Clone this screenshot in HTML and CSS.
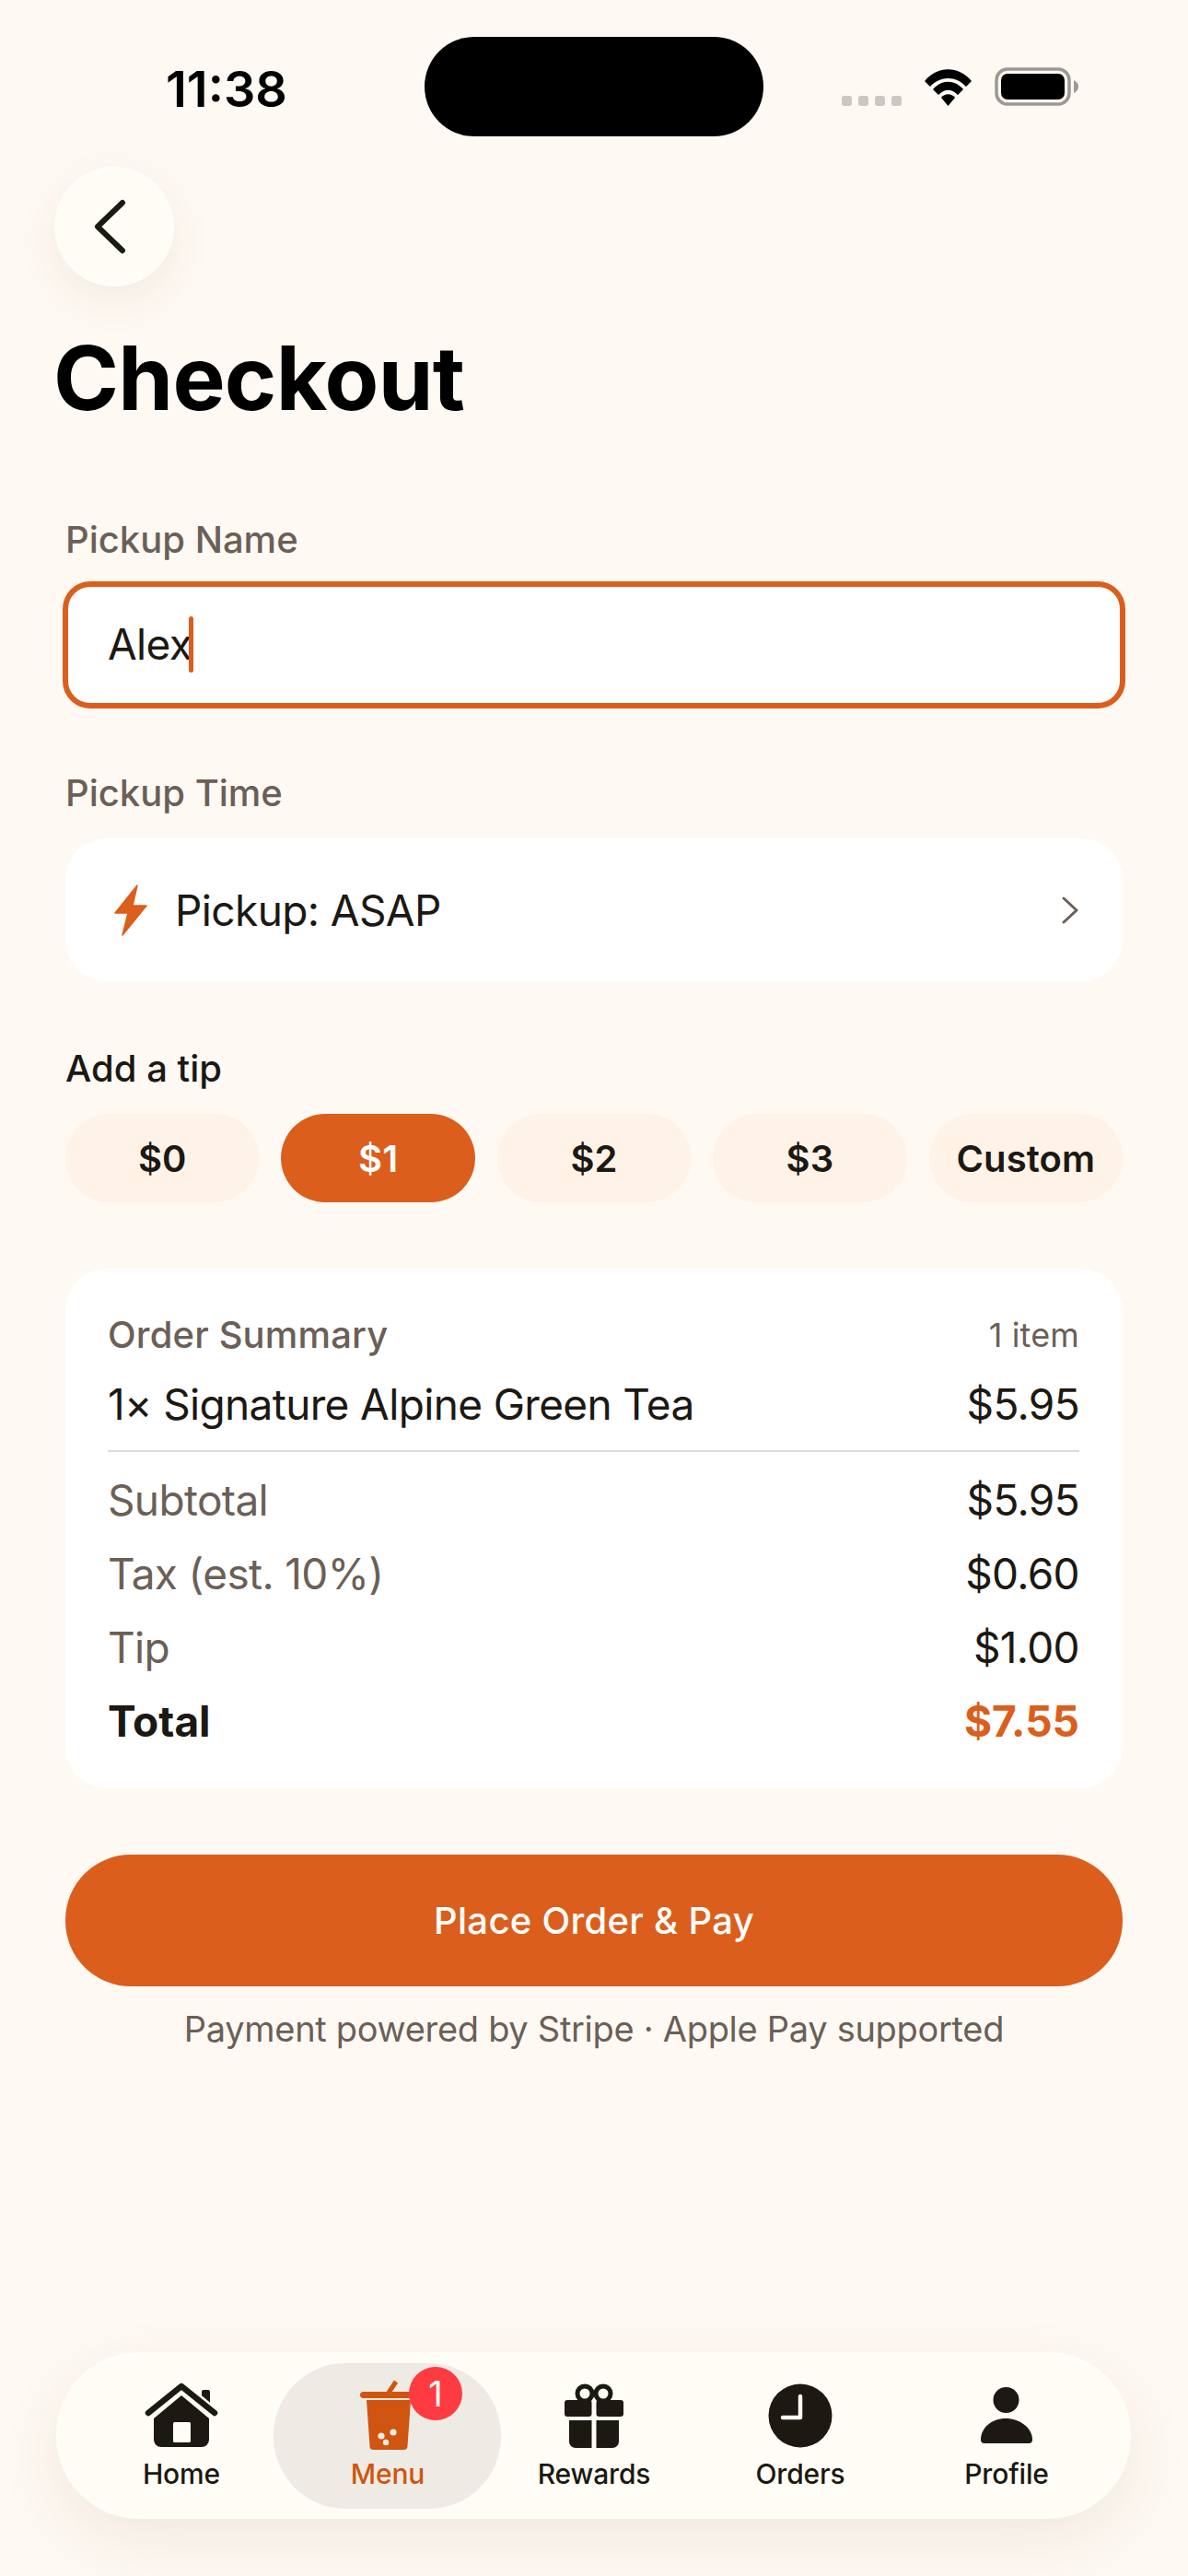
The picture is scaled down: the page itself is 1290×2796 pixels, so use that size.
FILE: index.html
```html
<!DOCTYPE html>
<html lang="en">
<head>
  <meta charset="UTF-8" />
  <meta name="viewport" content="width=device-width, initial-scale=1.0"/>
  <title>Checkout</title>
  <link rel="stylesheet" href="styles.css">
</head>
<body>

  <div class="status">
    <span class="time">11:38</span>
    <div class="island"></div>
    <div class="status-icons">
      <div class="dots"><i></i><i></i><i></i><i></i></div>
      <svg width="55" height="41" viewBox="0 0 55 41">
        <path d="M2 14 C16 -3 39 -3 53 14 L47 20 C36 8 19 8 8 20 Z" fill="#000"/>
        <path d="M11 23 C20 12 35 12 44 23 L38 29 C31 22 24 22 17 29 Z" fill="#000"/>
        <path d="M20 32 C24 27 31 27 35 32 L27.5 41 Z" fill="#000"/>
      </svg>
      <svg width="91" height="42" viewBox="0 0 91 42">
        <rect x="2" y="2" width="79" height="38" rx="12" fill="none" stroke="#9c9892" stroke-width="3.5"/>
        <rect x="7" y="7" width="69" height="28" rx="7" fill="#000"/>
        <path d="M86 14 C90 16 91 19 91 21 C91 23 90 26 86 28 Z" fill="#9c9892"/>
      </svg>
    </div>
  </div>

  <button class="back">
    <svg width="36" height="60" viewBox="0 0 36 60">
      <path d="M32 4 L5 30 L32 56" fill="none" stroke="#1c1812" stroke-width="6" stroke-linecap="round" stroke-linejoin="round"/>
    </svg>
  </button>

  <h1 class="title">Checkout</h1>

  <div class="form">
    <div class="label">Pickup Name</div>
    <div class="input">Alex<span class="caret"></span></div>

    <div class="label label-time">Pickup Time</div>
    <div class="picker">
      <svg width="36" height="56" viewBox="0 0 36 56">
        <path d="M25 1 L1 31 H15 L9 55 L35 23 H20 Z" fill="#db5e1c" stroke="#db5e1c" stroke-width="1.5" stroke-linejoin="round"/>
      </svg>
      <span class="picker-text">Pickup: ASAP</span>
      <svg class="picker-arrow" width="20" height="30" viewBox="0 0 20 30">
        <path d="M3 2 L17 15 L3 28" fill="none" stroke="#6b5f57" stroke-width="3" stroke-linecap="round" stroke-linejoin="round"/>
      </svg>
    </div>

    <div class="label label-tip">Add a tip</div>
    <div class="tips">
      <button class="tip">$0</button>
      <button class="tip selected">$1</button>
      <button class="tip">$2</button>
      <button class="tip">$3</button>
      <button class="tip">Custom</button>
    </div>

    <div class="summary">
      <div class="row head">
        <span>Order Summary</span>
        <span class="count">1 item</span>
      </div>
      <div class="row item">
        <span>1× Signature Alpine Green Tea</span>
        <span>$5.95</span>
      </div>
      <div class="divider"></div>
      <div class="row"><span class="muted">Subtotal</span><span>$5.95</span></div>
      <div class="row"><span class="muted">Tax (est. 10%)</span><span>$0.60</span></div>
      <div class="row"><span class="muted">Tip</span><span>$1.00</span></div>
      <div class="row total"><span>Total</span><span class="amount">$7.55</span></div>
    </div>

    <button class="pay">Place Order &amp; Pay</button>
    <p class="note">Payment powered by Stripe · Apple Pay supported</p>
  </div>

  <nav class="tabbar">
    <a class="tab">
      <span class="tab-icon">
        <svg width="80" height="72" viewBox="0 0 80 72" fill="#1c1812">
          <rect x="62" y="8" width="9" height="18" rx="2"/>
          <path d="M40 14 L70 39 V62 a8 8 0 0 1 -8 8 H18 a8 8 0 0 1 -8 -8 V39 Z"/>
          <rect x="31" y="43" width="19" height="22" rx="1.5" fill="#fffdf6"/>
          <path d="M4 33 L40 3 L76 33" fill="none" stroke="#fffdf6" stroke-width="11" stroke-linejoin="round"/>
          <path d="M4 33 L40 4 L76 33" fill="none" stroke="#1c1812" stroke-width="6.5" stroke-linecap="round" stroke-linejoin="round"/>
        </svg>
      </span>
      <span>Home</span>
    </a>
    <a class="tab active">
      <span class="tab-icon">
        <svg width="60" height="80" viewBox="0 0 60 80" fill="#cf5510">
          <path d="M31 15 L39 3" fill="none" stroke="#cf5510" stroke-width="5"/>
          <rect x="0" y="14" width="60" height="7" rx="3.5"/>
          <path d="M7 23 H55 L51.5 73 a4 4 0 0 1 -4 4 H14.5 a4 4 0 0 1 -4 -4 Z"/>
          <circle cx="23" cy="62" r="3.6" fill="#edebe4"/>
          <circle cx="36" cy="58" r="3.6" fill="#edebe4"/>
          <circle cx="28" cy="69" r="3.2" fill="#edebe4"/>
        </svg>
        <span class="badge">1</span>
      </span>
      <span>Menu</span>
    </a>
    <a class="tab">
      <span class="tab-icon">
        <svg width="64" height="70" viewBox="0 0 64 70" fill="#1c1812">
          <circle cx="22" cy="11" r="8" fill="none" stroke="#1c1812" stroke-width="5"/>
          <circle cx="42" cy="11" r="8" fill="none" stroke="#1c1812" stroke-width="5"/>
          <rect x="0" y="18" width="29.5" height="18" rx="3"/>
          <rect x="34.5" y="18" width="29.5" height="18" rx="3"/>
          <path d="M5 40 H29.5 V70 H12 a7 7 0 0 1 -7 -7 Z"/>
          <path d="M34.5 40 H59 V63 a7 7 0 0 1 -7 7 H34.5 Z"/>
        </svg>
      </span>
      <span>Rewards</span>
    </a>
    <a class="tab">
      <span class="tab-icon">
        <svg width="70" height="70" viewBox="0 0 70 70">
          <circle cx="35" cy="35" r="34.5" fill="#1c1812"/>
          <path d="M35 14 V37 H16" fill="none" stroke="#fffdf6" stroke-width="4.5" stroke-linecap="round" stroke-linejoin="round"/>
        </svg>
      </span>
      <span>Orders</span>
    </a>
    <a class="tab">
      <span class="tab-icon">
        <svg width="58" height="62" viewBox="0 0 58 62" fill="#1c1812">
          <circle cx="28.5" cy="14" r="14"/>
          <path d="M1 57 C1 44 13 34 28 34 C43 34 57 44 57 57 a4 4 0 0 1 -4 4 H5 a4 4 0 0 1 -4 -4 Z"/>
        </svg>
      </span>
      <span>Profile</span>
    </a>
  </nav>

</body>
</html>
```

FILE: styles.css
```css
* {
  box-sizing: border-box;
}

body {
  margin: 0;
  min-height: 100vh;
  display: flex;
  flex-direction: column;
  font-family: Inter, "Liberation Sans", sans-serif;
  background-color: #fff9f3;
  color: #1c1814;
}

button {
  font-family: inherit;
  border: none;
  padding: 0;
}

/* status bar */
.status {
  display: grid;
  grid-template-columns: 281px 368px 1fr;
  align-items: center;
  height: 108px;
  margin-top: 40px;
  padding: 0 119px 0 180px;
}

.time {
  font-size: 54px;
  font-weight: 600;
  color: #000;
  padding-top: 4px;
}

.island {
  height: 108px;
  border-radius: 54px;
  background-color: #000;
}

.status-icons {
  display: flex;
  align-items: flex-end;
  justify-content: flex-end;
  gap: 23px;
}

.dots {
  display: flex;
  gap: 7px;
}

.dots i {
  width: 11px;
  height: 11px;
  border-radius: 3px;
  background-color: #cbc7c3;
}

/* header */
.back {
  display: flex;
  align-items: center;
  justify-content: center;
  width: 130px;
  height: 130px;
  margin: 33px 0 0 59px;
  padding-right: 10px;
  border-radius: 50%;
  background-color: #fffdf6;
  box-shadow: 0 16px 48px rgba(70, 50, 30, 0.07);
}

.title {
  margin: 44px 0 0 58px;
  font-size: 96px;
  line-height: 110px;
  font-weight: 700;
  color: #000;
  letter-spacing: -0.7px;
}

/* form */
.form {
  margin-top: 96px;
  padding: 0 71px;
}

.label {
  font-size: 40px;
  line-height: 50px;
  font-weight: 500;
  color: #6b5f57;
}

.label-time {
  margin-top: 67px;
}

.label-tip {
  margin-top: 70px;
  color: #1c1814;
}

.input {
  display: flex;
  align-items: center;
  height: 138px;
  margin: 20px -3px 0;
  padding-left: 43px;
  padding-bottom: 2px;
  border: 6px solid #db5e1c;
  border-radius: 30px;
  background-color: #fff;
  font-size: 46px;
  letter-spacing: -0.65px;
}

.caret {
  width: 5px;
  height: 61px;
  margin-left: -3px;
  border-radius: 3px;
  background-color: #db5e1c;
}

.picker {
  display: flex;
  align-items: center;
  height: 155px;
  margin-top: 24px;
  padding: 0 47px 0 53px;
  border-radius: 45px;
  background-color: #fff;
}

.picker-text {
  margin-left: 30px;
  font-size: 46px;
  letter-spacing: -0.6px;
}

.picker-arrow {
  margin-left: auto;
}

.tips {
  display: grid;
  grid-template-columns: repeat(5, 1fr);
  gap: 24px;
  margin-top: 24px;
}

.tip {
  height: 96px;
  border-radius: 48px;
  background-color: #fff2e6;
  color: #1c1814;
  font-size: 40px;
  font-weight: 600;
  letter-spacing: 0.1px;
}

.tip.selected {
  background-color: #db5e1c;
  color: #fff;
}

/* order summary */
.summary {
  display: flex;
  flex-direction: column;
  gap: 20px;
  margin-top: 72px;
  padding: 47px 47px 43px 46px;
  border-radius: 45px;
  background-color: #fff;
}

.row {
  display: flex;
  justify-content: space-between;
  align-items: center;
  font-size: 46px;
  line-height: 60px;
  letter-spacing: -0.65px;
}

.head {
  line-height: 50px;
  font-size: 40px;
  font-weight: 500;
  letter-spacing: 0.15px;
  color: #6b5f57;
}

.count {
  font-size: 36px;
  font-weight: 400;
}

.divider {
  height: 2px;
  margin-bottom: 2px;
  background-color: #dcdcda;
}

.muted {
  color: #6b5f57;
}

.total {
  font-weight: 700;
  letter-spacing: 0;
}

.amount {
  color: #db5e1c;
}

.pay {
  display: block;
  width: 100%;
  height: 143px;
  margin-top: 72px;
  border-radius: 71px;
  background-color: #db5e1c;
  color: #fff;
  font-size: 40px;
  font-weight: 500;
  letter-spacing: 0.3px;
}

.note {
  margin: 21px 0 0;
  text-align: center;
  font-size: 38px;
  line-height: 50px;
  letter-spacing: -0.3px;
  color: #6b5f57;
}

/* tab bar */
.tabbar {
  display: grid;
  grid-template-columns: repeat(5, 224px);
  height: 181px;
  margin: auto 62px 62px 61px;
  padding: 31px 0 0 24px;
  border-radius: 90px;
  background-color: #fffdf6;
  box-shadow: 0 24px 70px rgba(70, 50, 30, 0.08);
}

.tab {
  position: relative;
  display: flex;
  flex-direction: column;
  align-items: center;
  font-size: 30px;
  line-height: 36px;
  font-weight: 500;
  letter-spacing: -0.15px;
  color: #1c1812;
}

.tab-icon {
  position: relative;
  display: flex;
  align-items: center;
  justify-content: center;
  height: 76px;
  margin-bottom: 7px;
}

.tab.active {
  color: #cf5510;
}

.tab.active::before {
  content: "";
  position: absolute;
  top: -19px;
  left: -12px;
  right: -11px;
  height: 158px;
  border-radius: 78px;
  background-color: #edebe4;
}

.tab.active > span {
  position: relative;
}

.badge {
  position: absolute;
  top: -15px;
  left: 53px;
  width: 58px;
  height: 58px;
  border-radius: 50%;
  background-color: #ff3b42;
  color: #fff;
  font-size: 38px;
  font-weight: 400;
  line-height: 58px;
  text-align: center;
}
```
